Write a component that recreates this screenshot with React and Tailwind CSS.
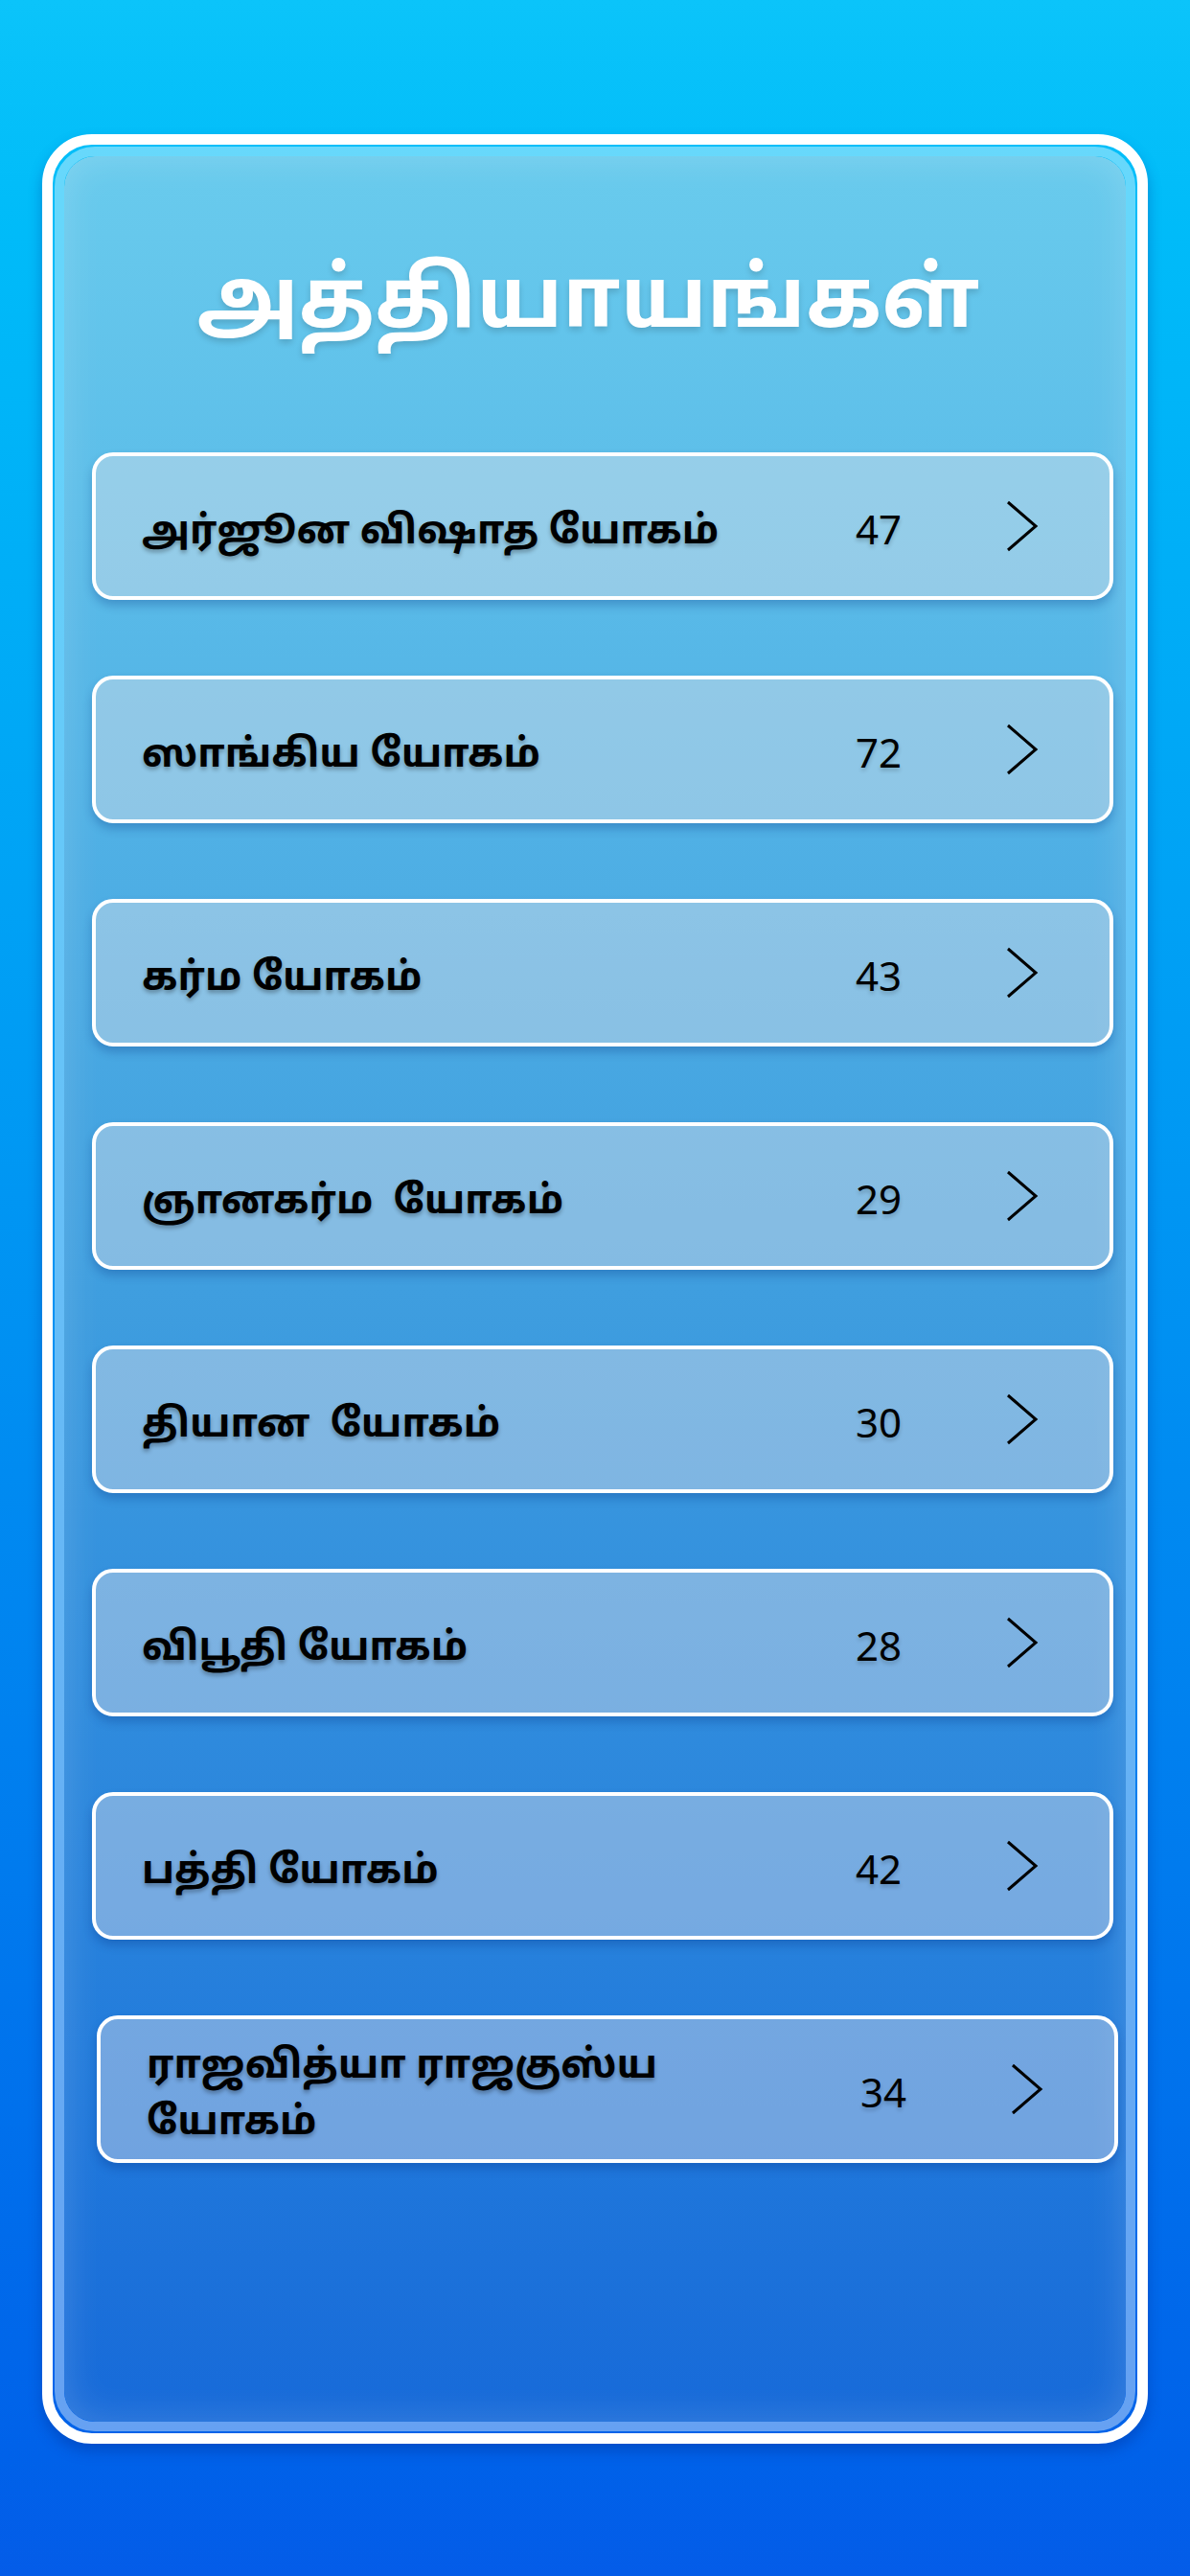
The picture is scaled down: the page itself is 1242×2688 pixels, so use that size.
import React from 'react';

const chapters = [
  { name: 'அர்ஜூன விஷாத யோகம்', verses: 47 },
  { name: 'ஸாங்கிய யோகம்', verses: 72 },
  { name: 'கர்ம யோகம்', verses: 43 },
  { name: 'ஞானகர்ம  யோகம்', verses: 29 },
  { name: 'தியான  யோகம்', verses: 30 },
  { name: 'விபூதி யோகம்', verses: 28 },
  { name: 'பத்தி யோகம்', verses: 42 },
  { name: 'ராஜவித்யா ராஜகுஸ்ய யோகம்', verses: 34, shifted: true },
];

const Chevron = () => (
  <svg width="36" height="54" viewBox="0 0 36 54" fill="none">
    <polyline points="3,2 32,27 3,52" stroke="#000" strokeWidth="3" strokeLinejoin="miter" />
  </svg>
);

const ChapterRow = ({ name, verses, shifted }) => (
  <div
    className={`flex items-center h-[154px] rounded-[22px] border-4 border-white bg-[rgba(235,230,232,0.4)] shadow-[0_6px_10px_rgba(0,40,120,0.25)] pl-[48px] pr-[73px] ${shifted ? 'ml-[5px] -mr-[5px]' : ''}`}
  >
    <div className="w-[620px] mr-[125px] pt-[14px] whitespace-pre-wrap font-bold text-[41px] leading-[59px] text-black [text-shadow:0_3px_4px_rgba(0,0,0,0.3)]">
      {name}
    </div>
    <div className="flex-1 pt-[5px] text-[42px] text-black font-['Noto_Sans',sans-serif] [text-shadow:0_3px_4px_rgba(0,0,0,0.2)]">
      {verses}
    </div>
    <Chevron />
  </div>
);

export default function App() {
  return (
    <div className="w-[1242px] h-[2688px] bg-linear-to-b from-[#0bc4fa] to-[#045ce8] pt-[140px] px-[44px] font-['Noto_Sans_Tamil','Noto_Sans',sans-serif]">
      {/* outer frame */}
      <div className="h-[2410px] rounded-[52px] border-[11px] border-white p-[2px] shadow-[0_8px_14px_rgba(0,40,140,0.35)]">
        <div className="h-full rounded-[42px] border-[10px] border-[rgba(255,255,255,0.4)] overflow-hidden">
          <div className="h-full rounded-[32px] bg-linear-to-b from-[#69cbed] via-[#3f9edf] to-[#176ad9] shadow-[inset_0_0_40px_rgba(255,255,255,0.18)] pl-[29px] pr-[13px] pt-[76px]">
            <h1 className="text-center pr-[30px] text-white font-bold text-[87px] leading-[160px] [text-shadow:0_4px_6px_rgba(0,0,0,0.15)]">
              அத்தியாயங்கள்
            </h1>
            <div className="mt-[73px] flex flex-col gap-[79px]">
              {chapters.map((c, i) => (
                <ChapterRow key={i} {...c} />
              ))}
            </div>
          </div>
        </div>
      </div>
    </div>
  );
}
